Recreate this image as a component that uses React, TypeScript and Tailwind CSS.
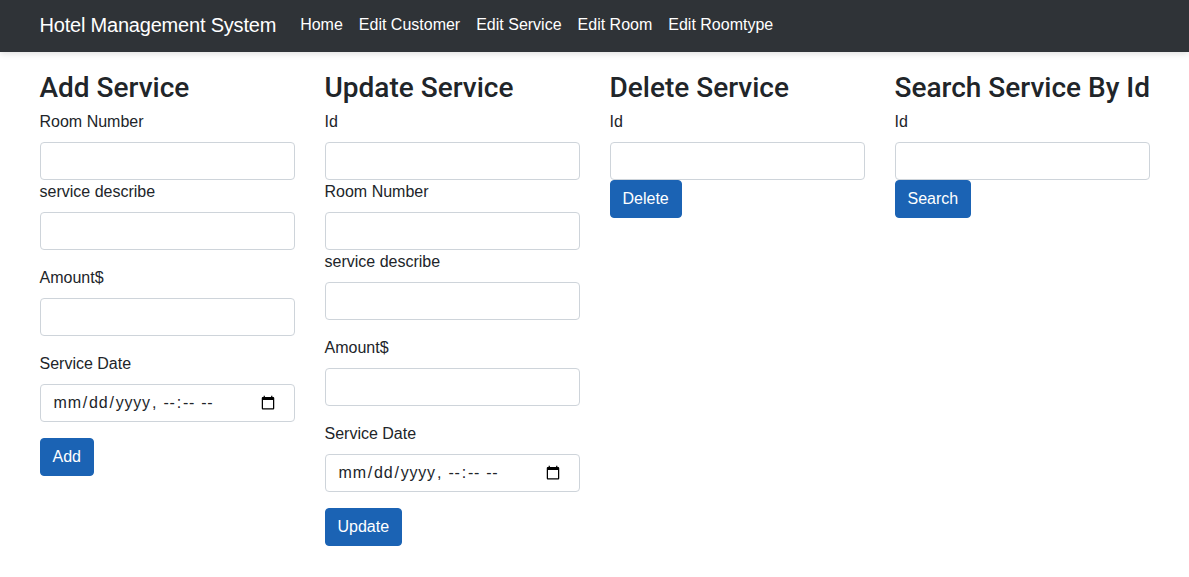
import React from 'react';

const font = { fontFamily: '"Liberation Sans", Arial, sans-serif' };
const headFont = { fontFamily: 'Roboto, "Liberation Sans", Arial, sans-serif' };

// --- Form bits ---
const Label: React.FC<{ children: React.ReactNode }> = ({ children }) => (
  <label className="block mb-2 text-base leading-6 text-[#212529]">{children}</label>
);

const Field: React.FC<{ label: string; type?: string; spaced?: boolean }> = ({ label, type = 'text', spaced = false }) => (
  <div className={spaced ? 'mb-4' : ''}>
    <Label>{label}</Label>
    <input
      type={type}
      className={`block w-full h-[38px] px-3 py-[6px] text-base leading-6 text-[#212529] bg-white border border-[#ced4da] rounded outline-none ${type === 'datetime-local' ? 'tracking-[0.8px] pr-4' : ''}`}
      style={font}
    />
  </div>
);

const Button: React.FC<{ children: React.ReactNode }> = ({ children }) => (
  <button
    className="h-[38px] px-3 text-base leading-6 text-white bg-[#1b63b4] border border-[#1b63b4] rounded"
    style={font}
  >
    {children}
  </button>
);

const Heading: React.FC<{ children: React.ReactNode }> = ({ children }) => (
  <h3 className="text-[28px] leading-[1.2] pt-[3px] mb-[5px] font-medium text-[#212529] whitespace-nowrap" style={headFont}>
    {children}
  </h3>
);

const navLinks = ['Home', 'Edit Customer', 'Edit Service', 'Edit Room', 'Edit Roomtype'];

export default function App() {
  return (
    <div className="min-h-screen bg-white text-[#212529]" style={font}>
      <nav className="h-[52px] bg-[#2f3337] shadow-[0_2px_6px_rgba(0,0,0,0.12)] relative">
        <div className="max-w-[1140px] mx-auto px-[15px] h-full flex items-center pb-[2px]">
          <span className="text-xl text-white mr-4 leading-[30px] tracking-[-0.2px]">Hotel Management System</span>
          <div className="flex">
            {navLinks.map(l => (
              <span key={l} className="px-2 text-base text-white leading-6">{l}</span>
            ))}
          </div>
        </div>
      </nav>

      <div className="max-w-[1140px] mx-auto pt-4 grid grid-cols-4">
        {/* Add */}
        <div className="px-[15px]">
          <Heading>Add Service</Heading>
          <Field label="Room Number" />
          <Field label="service describe" spaced />
          <Field label="Amount$" spaced />
          <Field label="Service Date" type="datetime-local" spaced />
          <Button>Add</Button>
        </div>

        {/* Update */}
        <div className="px-[15px]">
          <Heading>Update Service</Heading>
          <Field label="Id" />
          <Field label="Room Number" />
          <Field label="service describe" spaced />
          <Field label="Amount$" spaced />
          <Field label="Service Date" type="datetime-local" spaced />
          <Button>Update</Button>
        </div>

        {/* Delete */}
        <div className="px-[15px]">
          <Heading>Delete Service</Heading>
          <Field label="Id" />
          <Button>Delete</Button>
        </div>

        {/* Search */}
        <div className="px-[15px]">
          <Heading>Search Service By Id</Heading>
          <Field label="Id" />
          <Button>Search</Button>
        </div>
      </div>
    </div>
  );
}
